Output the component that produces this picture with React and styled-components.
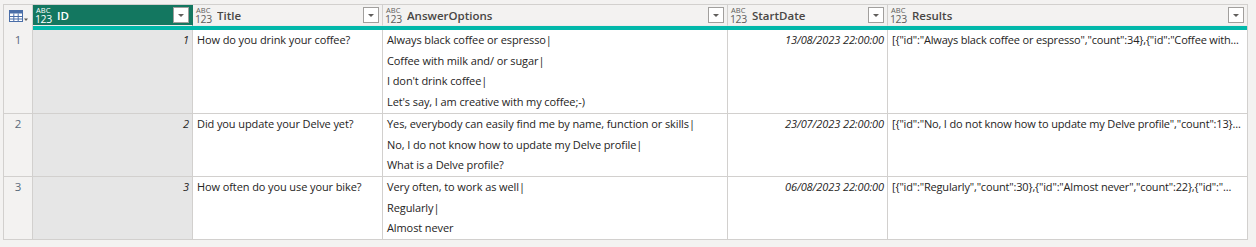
import React from 'react';
import styled, { createGlobalStyle } from 'styled-components';

const GlobalStyle = createGlobalStyle`
  html, body {
    margin: 0;
    padding: 0;
    background: #f3f2f1;
  }
  body {
    font-family: 'Segoe UI', 'Open Sans', 'Noto Sans', sans-serif;
    color: #252423;
  }
`;

const Page = styled.div`
  padding: 4px 8px 8px 3px;
  background: #f3f2f1;
  width: 1256px;
  height: 247px;
  box-sizing: border-box;
`;

const Grid = styled.div`
  display: grid;
  grid-template-columns: 29px 160px 190px 345px 160px 360px;
  width: max-content;
  border-left: 1px solid #d2d0ce;
  border-top: 1px solid #d2d0ce;
`;

const Corner = styled.div`
  grid-row: span 2;
  background: #f3f2f1;
  border-right: 1px solid #d2d0ce;
  display: flex;
  align-items: flex-start;
  justify-content: flex-end;
  padding: 5px 3px 0 0;
  box-sizing: border-box;
`;

const HeaderCell = styled.div`
  height: 20px;
  display: flex;
  align-items: center;
  gap: 6px;
  padding: 0 3px 0 2px;
  background: ${p => (p.$selected ? '#137760' : '#f3f2f1')};
  color: ${p => (p.$selected ? '#ffffff' : '#484644')};
  border-right: 1px solid ${p => (p.$selected ? '#137760' : '#d2d0ce')};
  border-bottom: 1px solid #ececec;
`;

const TypeIcon = styled.span`
  display: inline-flex;
  flex-direction: column;
  align-items: flex-start;
  width: 16px;
  flex: none;
  color: ${p => (p.$light ? '#ffffff' : '#605e5c')};
  font-family: 'Open Sans', sans-serif;

  b {
    font-weight: 400;
    font-size: 7.5px;
    line-height: 8px;
    letter-spacing: 0.1px;
    padding-left: 1px;
  }
  i {
    font-style: normal;
    font-size: 10.5px;
    line-height: 10px;
    letter-spacing: -0.4px;
  }
`;

const Label = styled.span`
  flex: 1;
  font-size: 11.5px;
  font-weight: 600;
  white-space: nowrap;
  overflow: hidden;
`;

const FilterButton = styled.span`
  width: 14px;
  height: 14px;
  flex: none;
  background: #ffffff;
  border: 1px solid #a19f9d;
  display: flex;
  align-items: center;
  justify-content: center;

  &::after {
    content: '';
    border-left: 3px solid transparent;
    border-right: 3px solid transparent;
    border-top: 3px solid #605e5c;
  }
`;

const QualityBar = styled.div`
  grid-column: 2 / span 5;
  height: 4px;
  background: #01b8aa;
  border-right: 1px solid #d2d0ce;
`;

const RowNum = styled.div`
  background: #f3f2f1;
  border-right: 1px solid #d2d0ce;
  border-bottom: 1px solid #d2d0ce;
  text-align: center;
  font-size: 11.5px;
  line-height: 20.7px;
  color: #5c6a7a;
`;

const Cell = styled.div`
  background: ${p => (p.$selected ? '#e6e6e6' : '#ffffff')};
  border-right: 1px solid #d2d0ce;
  border-bottom: 1px solid #d2d0ce;
  padding: 0 ${p => (p.$right ? '3px' : '4px')} 0 4px;
  font-size: 11px;
  letter-spacing: -0.1px;
  line-height: 20.7px;
  text-align: ${p => (p.$right ? 'right' : 'left')};
  font-style: ${p => (p.$italic ? 'italic' : 'normal')};
  min-width: 0;
  overflow: hidden;
`;

const Option = styled.div`
  white-space: nowrap;
`;

const Truncated = styled.div`
  white-space: nowrap;
  overflow: hidden;
  text-overflow: ellipsis;
  letter-spacing: -0.17px;
`;

const TableIcon = () => (
  <svg width="20" height="14" viewBox="0 0 20 14">
    <rect x="0.5" y="0.5" width="13" height="11" fill="#ffffff" stroke="#4a6ea8" />
    <rect x="0.5" y="0.5" width="13" height="3" fill="#4a6ea8" />
    <path d="M4.8 3.5v8M9.2 3.5v8M0.5 6.5h13M0.5 9h13" stroke="#4a6ea8" strokeWidth="1" />
    <path d="M15 8.5h4l-2 2.5z" fill="#605e5c" />
  </svg>
);

const columns = ['ID', 'Title', 'AnswerOptions', 'StartDate', 'Results'];

const rows = [
  {
    id: 1,
    title: 'How do you drink your coffee?',
    options: [
      'Always black coffee or espresso|',
      'Coffee with milk and/ or sugar|',
      "I don't drink coffee|",
      "Let's say, I am creative with my coffee;-)",
    ],
    date: '13/08/2023 22:00:00',
    results: '[{"id":"Always black coffee or espresso","count":34},{"id":"Coffee with...',
  },
  {
    id: 2,
    title: 'Did you update your Delve yet?',
    options: [
      'Yes, everybody can easily find me by name, function or skills|',
      'No, I do not know how to update my Delve profile|',
      'What is a Delve profile?',
    ],
    date: '23/07/2023 22:00:00',
    results: '[{"id":"No, I do not know how to update my Delve profile","count":13}...',
  },
  {
    id: 3,
    title: 'How often do you use your bike?',
    options: ['Very often, to work as well|', 'Regularly|', 'Almost never'],
    date: '06/08/2023 22:00:00',
    results: '[{"id":"Regularly","count":30},{"id":"Almost never","count":22},{"id":"...',
  },
];

const App = () => (
  <Page>
    <GlobalStyle />
    <Grid>
      <Corner>
        <TableIcon />
      </Corner>
      {columns.map((c, i) => (
        <HeaderCell key={c} $selected={i === 0}>
          <TypeIcon $light={i === 0}>
            <b>ABC</b>
            <i>123</i>
          </TypeIcon>
          <Label>{c}</Label>
          <FilterButton />
        </HeaderCell>
      ))}
      <QualityBar />
      {rows.map(r => (
        <React.Fragment key={r.id}>
          <RowNum>{r.id}</RowNum>
          <Cell $selected $right $italic>{r.id}</Cell>
          <Cell>{r.title}</Cell>
          <Cell>
            {r.options.map(o => (
              <Option key={o}>{o}</Option>
            ))}
          </Cell>
          <Cell $right $italic>{r.date}</Cell>
          <Cell>
            <Truncated>{r.results}</Truncated>
          </Cell>
        </React.Fragment>
      ))}
    </Grid>
  </Page>
);

export default App;
